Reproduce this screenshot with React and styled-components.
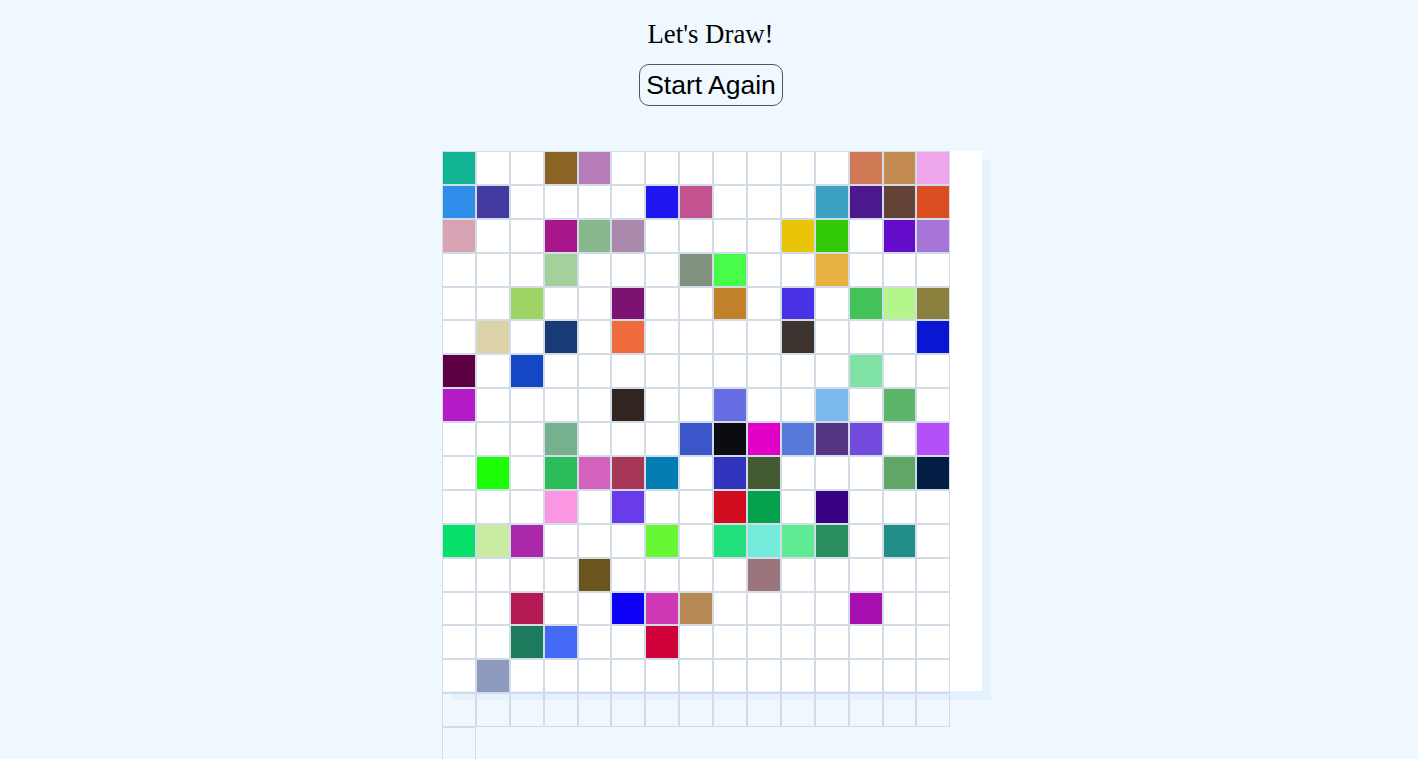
import React from "react";
import styled, { createGlobalStyle } from "styled-components";

const GlobalStyle = createGlobalStyle`
  html, body {
    margin: 0;
    padding: 0;
    background: #f0f8ff;
  }
  body {
    font-family: "Liberation Serif", "Times New Roman", serif;
    overflow: hidden;
  }
`;

const Page = styled.div`
  display: flex;
  flex-direction: column;
  align-items: center;
  padding-top: 20px;
  height: 759px;
  box-sizing: border-box;
`;

const Title = styled.div`
  font-family: "Liberation Serif", "Times New Roman", serif;
  font-size: 26.8px;
  color: #000;
  line-height: 29px;
  margin-left: 3px;
`;

const ResetButton = styled.button`
  margin-top: 15px;
  font-family: "Liberation Sans", Arial, sans-serif;
  font-size: 26.5px;
  line-height: 30px;
  padding: 5px 6px;
  border: 1px solid #555;
  border-radius: 10px;
  background: transparent;
  color: #000;
  margin-left: 4px;
`;

const Board = styled.div`
  margin-top: 45px;
  margin-left: 6px;
  width: 540px;
  height: 540px;
  flex: none;
  background: #ffffff;
  box-shadow: 9px 9px 0 #e5f1fd;
  display: flex;
  flex-wrap: wrap;
  align-content: flex-start;
`;

const Cell = styled.div`
  width: 31.9px;
  height: 31.9px;
  border: 1px solid #d1dce6;
  background: ${(p) => p.$color || "transparent"};
  flex: none;
`;

const painted = {
  "0,0": "#10b495", "0,3": "#8b6425", "0,4": "#b77db8", "0,12": "#d07a55", "0,13": "#c48c50", "0,14": "#eea7ec",
  "1,0": "#2f8dea", "1,1": "#433ba0", "1,6": "#1f16ef", "1,7": "#c35290", "1,11": "#3ca0c2", "1,12": "#4c188d", "1,13": "#634338", "1,14": "#dc4e22",
  "2,0": "#d8a3b2", "2,3": "#a8168c", "2,4": "#88b78c", "2,5": "#a98aad", "2,10": "#e8c507", "2,11": "#33cb07", "2,13": "#650cca", "2,14": "#a774d7",
  "3,3": "#a4d09c", "3,7": "#81917e", "3,8": "#48fc4a", "3,11": "#e8b242",
  "4,2": "#9ed463", "4,5": "#7c1271", "4,8": "#c1802a", "4,10": "#4932e5", "4,12": "#42c259", "4,13": "#b4f68c", "4,14": "#8a7f3d",
  "5,1": "#dbd2a7", "5,3": "#183a75", "5,5": "#ee6b3d", "5,10": "#3d3430", "5,14": "#0a17d2",
  "6,0": "#5c0042", "6,2": "#1447c6", "6,12": "#80e2a4",
  "7,0": "#b41bc6", "7,5": "#32241e", "7,8": "#666ce2", "7,11": "#7ab8ee", "7,13": "#5db56a",
  "8,3": "#76b18f", "8,7": "#3b56c8", "8,8": "#0a0c0f", "8,9": "#e000c6", "8,10": "#5779da", "8,11": "#553482", "8,12": "#724ade", "8,14": "#b54ffa",
  "9,1": "#1cfe05", "9,3": "#2bbd5a", "9,4": "#d462bd", "9,5": "#a73756", "9,6": "#037db4", "9,8": "#3034bd", "9,9": "#435a32", "9,13": "#60a666", "9,14": "#031d45",
  "10,3": "#fb97e2", "10,5": "#6a3ce9", "10,8": "#d00c1e", "10,9": "#03a14c", "10,11": "#380084",
  "11,0": "#08e06c", "11,1": "#c9eba2", "11,2": "#ac28ab", "11,6": "#68f735", "11,8": "#22e07c", "11,9": "#75ebdb", "11,10": "#5fea94", "11,11": "#298e60", "11,13": "#218f88",
  "12,4": "#6a561c", "12,9": "#9b757b",
  "13,2": "#b41b54", "13,5": "#0c00f7", "13,6": "#d038b6", "13,7": "#b78a55", "13,12": "#a80fb0",
  "14,2": "#1e7a5c", "14,3": "#446af5", "14,6": "#d0003a",
  "15,1": "#8e9abd",
};

const cells = Array.from({ length: 256 }, (_, i) => {
  const r = Math.floor(i / 15);
  const c = i % 15;
  return painted[`${r},${c}`];
});

export default function App() {
  return (
    <>
      <GlobalStyle />
      <Page>
        <Title>Let's Draw!</Title>
        <ResetButton>Start Again</ResetButton>
        <Board>
          {cells.map((color, i) => (
            <Cell key={i} $color={color} />
          ))}
        </Board>
      </Page>
    </>
  );
}
